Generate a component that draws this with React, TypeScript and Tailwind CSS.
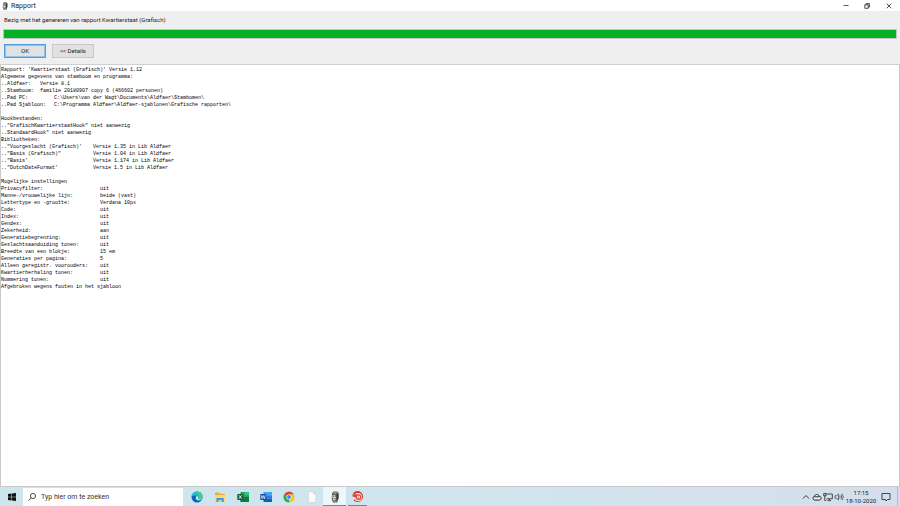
import type { ReactNode } from "react"

type Row = { label: string; value?: string }

const intro: Row[] = [
  { label: "Rapport: 'Kwartierstaat (Grafisch)' Versie 1.12" },
  { label: "Algemene gegevens van stamboom en programma:" },
]

const program: Row[] = [
  { label: "..Aldfaer:", value: "Versie 8.1" },
  { label: "..Stamboom:", value: "familie 20180907 copy 6 (466602 personen)" },
]

const paths: Row[] = [
  { label: "..Pad PC:", value: "C:\\Users\\van der Wagt\\Documents\\Aldfaer\\Stambomen\\" },
  {
    label: "..Pad Sjabloon:",
    value: "C:\\Programma Aldfaer\\Aldfaer-sjablonen\\Grafische rapporten\\",
  },
]

const hooks: Row[] = [
  { label: "Hookbestanden:" },
  { label: "..\"GrafischKwartierstaatHook\" niet aanwezig" },
  { label: "..StandaardHook\" niet aanwezig" },
  { label: "Bibliotheken:" },
]

const libraries: Row[] = [
  { label: "..\"Voorgeslacht (Grafisch)'", value: "Versie 1.35 in Lib Aldfaer" },
  { label: "..\"Basis (Grafisch)\"", value: "Versie 1.04 in Lib Aldfaer" },
  { label: "..\"Basis'", value: "Versie 1.174 in Lib Aldfaer" },
  { label: "..\"DutchDateFormat'", value: "Versie 1.5 in Lib Aldfaer" },
]

const settings: Row[] = [
  { label: "Privacyfilter:", value: "uit" },
  { label: "Manne-/vrouwelijke lijn:", value: "beide (vast)" },
  { label: "Lettertype en -grootte:", value: "Verdana 10px" },
  { label: "Code:", value: "uit" },
  { label: "Index:", value: "uit" },
  { label: "Gendex:", value: "uit" },
  { label: "Zekerheid:", value: "aan" },
  { label: "Generatiebegrenzing:", value: "uit" },
  { label: "Geslachtsaanduiding tonen:", value: "uit" },
  { label: "Breedte van een blokje:", value: "15 em" },
  { label: "Generaties per pagina:", value: "5" },
  { label: "Alleen geregistr. voorouders:", value: "uit" },
  { label: "Kwartierherhaling tonen:", value: "uit" },
  { label: "Nummering tonen:", value: "uit" },
]

function Lines({ rows, column = "" }: { rows: Row[]; column?: string }) {
  return (
    <>
      {rows.map((row) => (
        <div key={row.label} className="flex whitespace-pre">
          <span className={column}>{row.label}</span>
          {row.value && <span>{row.value}</span>}
        </div>
      ))}
    </>
  )
}

function AppIcon({ className }: { className: string }) {
  return (
    <svg viewBox="0 0 12 12" className={className} aria-hidden="true">
      <path d="M3 2.500 4.500.500h3.700L9.700 2v5L8.200 11.500H4L2.700 8z" fill="#5a5d59" />
      <path d="M4 2.300 5.500 1.300h2.300l.4 1-2.700.5z" fill="#a9ada8" />
      <path d="M3.200 4.200 6.800 3.800v4L5.800 9.200H4z" fill="#d9dbd6" />
      <path d="M3.800 4.700h1.200v.8H3.800zM5.800 4.600h1.200v.9H5.800zM4.200 7.400h2.200v.6H4.200z" fill="#222423" />
      <path d="M7.500 3h1.800v4.500L7.800 10z" fill="#3a3d3b" />
      <path d="M4.500 9.300h3v1.500h-3z" fill="#8d908b" />
    </svg>
  )
}

function TaskButton({
  label,
  state = "idle",
  children,
}: {
  label: string
  state?: "idle" | "running" | "active"
  children: ReactNode
}) {
  return (
    <button
      aria-label={label}
      className={`relative flex w-[23px] items-center justify-center ${
        state === "active" ? "bg-[#edf6fa]" : ""
      }`}
    >
      {children}
      {state === "active" && <span className="absolute inset-x-0 bottom-0 h-px bg-[#3d94dc]" />}
      {state === "running" && <span className="absolute inset-x-0.5 bottom-0 h-px bg-[#3d94dc]" />}
    </button>
  )
}

function TitleBar() {
  return (
    <header className="flex h-[11px] items-center bg-white">
      <AppIcon className="ml-px size-2" />
      <h1 className="ml-0.5 flex-1 text-[7px] leading-[10px]">Rapport</h1>
      <button aria-label="Minimaliseren" className="flex h-full w-[21px] items-center justify-center">
        <svg viewBox="0 0 6 6" className="size-1.5" stroke="#333">
          <path d="M.5 2.500h5" strokeWidth=".8" />
        </svg>
      </button>
      <button aria-label="Herstellen" className="flex h-full w-[21px] items-center justify-center">
        <svg viewBox="0 0 6 6" className="size-1.5" fill="none" stroke="#222" strokeWidth=".8">
          <path d="M.8 1.8h3.4v3.5H.8zM2 1.8V.6h3.4v3.5H4.2" />
        </svg>
      </button>
      <button aria-label="Sluiten" className="flex h-full w-[23px] items-center justify-center">
        <svg viewBox="0 0 6 6" className="size-1.5" stroke="#222" strokeWidth=".8">
          <path d="m.7.7 4.6 4.6M5.3.7.7 5.3" />
        </svg>
      </button>
    </header>
  )
}

function Taskbar() {
  return (
    <nav className="flex h-[19px] bg-linear-to-r from-[#cde6ee] via-[#d0e5ef] to-[#d5deec]">
      <button aria-label="Start" className="flex w-[23px] items-center justify-center">
        <svg viewBox="0 0 8 8" className="size-2" fill="#111">
          <path d="M0 1.1 3.5.6v3.2H0zM4 .5 8 0v3.8H4zM0 4.3h3.5v3.2L0 7zM4 4.3h4V8l-4-.5z" />
        </svg>
      </button>
      <label className="flex w-40 items-center border-t border-[#d8dfe2] bg-white pl-1">
        <svg viewBox="0 0 10 10" className="size-2.5" fill="none" stroke="#222" strokeWidth=".8">
          <circle cx="6" cy="4" r="2.6" />
          <path d="M4.1 5.9 1.4 8.8" />
        </svg>
        <input
          aria-label="Zoeken"
          placeholder="Typ hier om te zoeken"
          className="ml-1 min-w-0 flex-1 text-[7px] leading-[10px] outline-none placeholder:text-[#333]"
        />
      </label>

      <div className="ml-0.5 flex flex-1">
        <TaskButton label="Microsoft Edge">
          <svg viewBox="0 0 12 12" className="size-3">
            <circle cx="6" cy="6" r="5.5" fill="#0c66b8" />
            <path d="M.6 5.6C1.2 2.2 3.6.5 6.2.5c3 0 5.3 2.2 5.3 4.7 0 2-1.3 3.1-3 3.1-1.2 0-1.8-.5-1.6-1 .7-1.2.1-2.8-1.8-2.8C3 4.500 1.300 4.800.6 5.600z" fill="#27bfd0" />
            <path d="M6.500.500c2.900.1 5 2.200 5 4.700 0 2-1.300 3.100-3 3.100-1 0-1.600-.3-1.600-.8C9 6 8 3 6.500.500z" fill="#4dcc83" />
            <path d="M6.900 7.300c-.2.500.4 1 1.600 1 .9 0 1.700-.3 2.300-.9-.8 2.400-4.800 2.700-5.800.3-.5-1.300.2-2.700 1.300-2.700.6.5 1 1.400.6 2.300z" fill="#d6edf6" />
          </svg>
        </TaskButton>
        <TaskButton label="Verkenner">
          <svg viewBox="0 0 12 12" className="size-3">
            <path d="M1 1.500h4l1 1.200h5v8H1z" fill="#e9b040" />
            <path d="M1 4h10v6.700H1z" fill="#fbd970" />
            <path d="M2.500 7h7.200v4H7.800V9H4.500v2h-2z" fill="#3f9adb" />
          </svg>
        </TaskButton>
        <TaskButton label="Excel">
          <svg viewBox="0 0 12 12" className="size-3">
            <path d="M3.500 1H12v10H3.500z" fill="#21a366" />
            <path d="M7.700 1H12v3.300H7.700z" fill="#33c481" />
            <path d="M3.500 6H12v5H3.500z" fill="#107c41" />
            <path d="M.3 3h6v6h-6z" fill="#0d6233" />
            <path d="m2 4.300 2.600 3.400M4.600 4.300 2 7.700" stroke="#fff" strokeWidth=".9" />
          </svg>
        </TaskButton>
        <TaskButton label="Word">
          <svg viewBox="0 0 12 12" className="size-3">
            <path d="M3.500 1H12v3.300H3.500z" fill="#41a5ee" />
            <path d="M3.500 4.300H12v3.400H3.500z" fill="#2b7cd3" />
            <path d="M3.500 7.700H12V11H3.500z" fill="#185abd" />
            <path d="M.3 3h6v6h-6z" fill="#174ea6" />
            <path d="m1.300 4.300.9 3.400 1.100-3.100 1.100 3.100.9-3.400" fill="none" stroke="#fff" strokeWidth=".7" />
          </svg>
        </TaskButton>
        <TaskButton label="Chrome">
          <svg viewBox="0 0 12 12" className="size-3">
            <path d="M6 6 1.200 3.300a5.500 5.500 0 0 1 9.600 0z" fill="#e24435" />
            <path d="M6 6 1.200 3.300A5.500 5.500 0 0 0 6 11.500L8.400 7z" fill="#2fa653" />
            <path d="M6 6v5.500a5.500 5.500 0 0 0 4.800-8.200H6z" fill="#fbc116" />
            <circle cx="6" cy="6" r="2.600" fill="#fff" />
            <circle cx="6" cy="6" r="2" fill="#4285f4" />
          </svg>
        </TaskButton>
        <TaskButton label="Document">
          <svg viewBox="0 0 12 12" className="size-3">
            <path d="M2.500.700h5l2.300 2.300v8.300H2.500z" fill="#fbfbfb" stroke="#c5ccd0" strokeWidth=".5" />
            <path d="M7.500.700V3h2.300" fill="#e4e7e8" stroke="#bbc2c6" strokeWidth=".5" />
          </svg>
        </TaskButton>
        <TaskButton label="Aldfaer" state="active">
          <AppIcon className="size-3" />
        </TaskButton>
        <TaskButton label="Opname" state="running">
          <svg viewBox="0 0 12 12" className="size-3">
            <path d="M1 2.500A5.500 5.500 0 1 1 1.500 9.200L3 8a3.600 3.600 0 1 0-.2-4z" fill="#d63a2c" />
            <circle cx="6" cy="6" r="4" fill="#f7e3e0" />
            <path d="M.5 3.200h6a2.900 2.900 0 1 1-2.900 3.300L.5 5.500z" fill="#d94a3c" />
            <circle cx="6.500" cy="6.100" r="1.500" fill="#fff" />
            <circle cx="6.500" cy="6.100" r=".7" fill="#c22f22" />
          </svg>
        </TaskButton>
      </div>

      <div className="flex items-center gap-px pr-0.5 text-[#222]">
        <button aria-label="Verborgen pictogrammen" className="flex w-2.5 justify-center">
          <svg viewBox="0 0 8 8" className="size-2" fill="none" stroke="currentColor" strokeWidth=".9">
            <path d="m1 5.500 3-3 3 3" />
          </svg>
        </button>
        <button aria-label="OneDrive" className="flex w-2.5 justify-center">
          <svg viewBox="0 0 10 10" className="size-2.5" fill="#f4f6f7" stroke="currentColor" strokeWidth="1">
            <path d="M2.500 8A1.800 1.800 0 0 1 2.300 4.500C3 2 6.300 1.800 7.200 4.200 9.700 4.300 9.700 8 7.500 8z" />
            <path d="M2.300 4.800h5.200" fill="none" />
          </svg>
        </button>
        <button aria-label="Netwerk" className="flex w-2.5 justify-center">
          <svg viewBox="0 0 10 10" className="size-2.5" fill="none" stroke="currentColor" strokeWidth=".8">
            <path d="M3 2h6.300v4.800H3.500M6.200 6.800v1.700M4.500 8.600h3.500M.700 1.500h2.300v2.300H.700zM1.800 3.800v4.700h1.200" />
          </svg>
        </button>
        <button aria-label="Volume" className="flex w-2.5 justify-center">
          <svg viewBox="0 0 10 10" className="size-2.5" fill="none" stroke="currentColor" strokeWidth=".6">
            <path d="M1 3.700h1.500L4.500 2v6L2.500 6.300H1zM5.700 3.700q1 1.300 0 2.600M7 2.700q1.700 2.300 0 4.600M8.200 1.800q2.300 3.200 0 6.400" />
          </svg>
        </button>
        <time className="w-8 text-center text-[6px] leading-[8px] whitespace-nowrap">
          17:15
          <br />
          18-10-2020
        </time>
        <button aria-label="Meldingen" className="flex w-4 justify-center">
          <svg viewBox="0 0 10 10" className="size-2.5" fill="none" stroke="currentColor" strokeWidth=".8">
            <path d="M1 1.500h8v6H6.500L5 9 4.500 7.500H1z" />
          </svg>
        </button>
        <span className="ml-0.5 h-[19px] w-px bg-[#b3bdca]" />
      </div>
    </nav>
  )
}

export default function App() {
  return (
    <div className="flex min-h-screen flex-col bg-white font-[Roboto,'Noto_Sans',sans-serif] text-[#222]">
      <TitleBar />

      <section className="border-b border-[#cfcfcf] bg-[#efefef] px-[3px] pt-1 pb-1.5 text-[6px]">
        <p id="status" className="px-px leading-[10px]">
          Bezig met het genereren van rapport Kwartierstaat (Grafisch)
        </p>
        <div
          role="progressbar"
          aria-labelledby="status"
          aria-valuenow={100}
          className="mt-1 h-[10px] border border-[#c5c5c5] bg-[#06b025]"
        />
        <div className="mt-[5px] flex gap-1.5 px-px">
          <button className="h-3.5 w-[42px] border border-[#4a9fe0] bg-[#e1e1e1] leading-[10px] ring-1 ring-[#94c3e8] ring-inset">
            OK
          </button>
          <button className="h-3.5 w-[42px] border border-[#c8c8c8] bg-[#e1e1e1] leading-[10px]">
            &lt;&lt; Details
          </button>
        </div>
      </section>

      <main className="flex-1 border-x border-b border-[#c9c9c9] bg-white pt-0.5 font-['Liberation_Mono',monospace] text-[5px] leading-[7px] text-black">
        <Lines rows={intro} />
        <Lines rows={program} column="w-[39px]" />
        <Lines rows={paths} column="w-[53px]" />
        <div className="mt-[7px]">
          <Lines rows={hooks} />
          <Lines rows={libraries} column="w-[92px]" />
        </div>
        <div className="mt-[7px]">
          <p>Mogelijke instellingen</p>
          <Lines rows={settings} column="w-[99px]" />
          <p>Afgebroken wegens fouten in het sjabloon</p>
        </div>
      </main>

      <Taskbar />
    </div>
  )
}
